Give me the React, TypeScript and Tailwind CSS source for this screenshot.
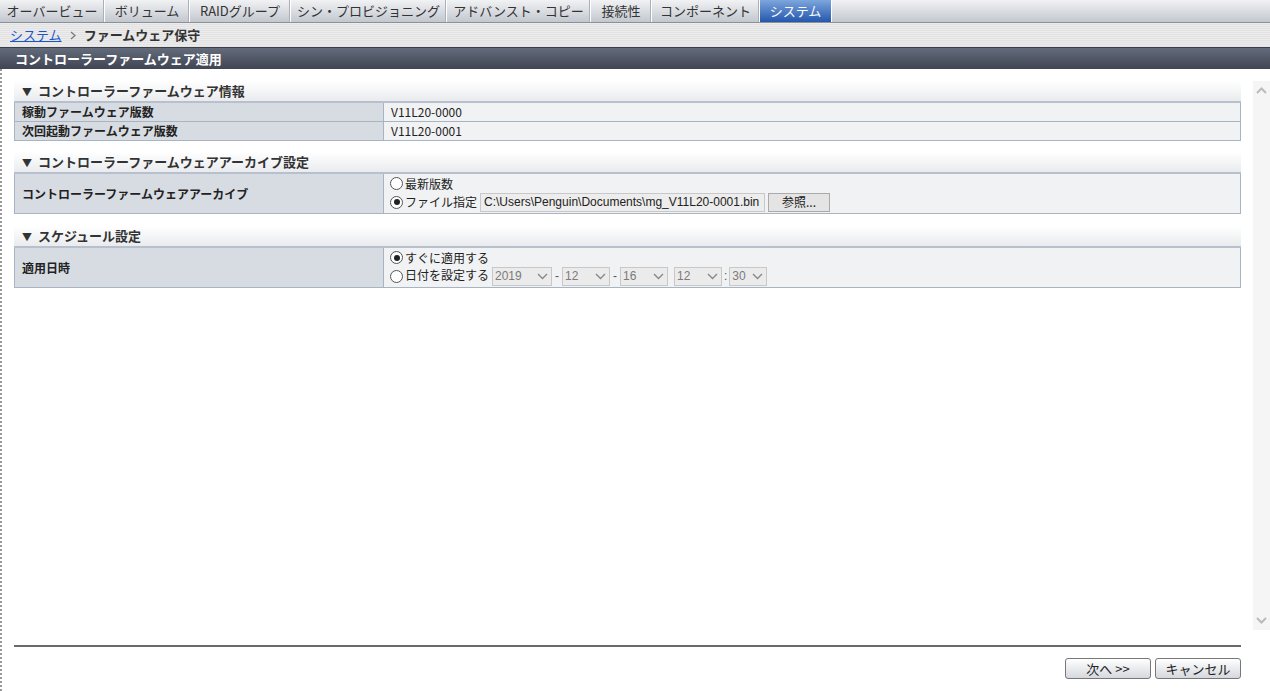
import React from 'react';

const FONT = '"Noto Sans CJK JP", "Liberation Sans", sans-serif';

const TABS = [
  { label: 'オーバービュー', w: 'w-[105px]' },
  { label: 'ボリューム', w: 'w-[85px]' },
  { label: 'RAIDグループ', w: 'w-[101px]' },
  { label: 'シン・プロビジョニング', w: 'w-[156px]' },
  { label: 'アドバンスト・コピー', w: 'w-[144px]' },
  { label: '接続性', w: 'w-[61px]' },
  { label: 'コンポーネント', w: 'w-[108px]' },
];

function Radio({ checked }: { checked?: boolean }) {
  return (
    <span className="inline-flex w-[13px] h-[13px] rounded-full border border-[#555] bg-white items-center justify-center mr-[2px] shrink-0">
      {checked && <span className="w-[6px] h-[6px] rounded-full bg-[#222]" />}
    </span>
  );
}

function Select({ value, w }: { value: string; w: string }) {
  return (
    <span className={`inline-flex items-center justify-between h-[19px] ${w} border border-[#c8c8c8] bg-[#ebebeb] text-[#7a7a7a] pl-[2px] pr-[3px]`}>
      <span>{value}</span>
      <svg width="11" height="7" viewBox="0 0 11 7">
        <path d="M1 1 L5.5 5.5 L10 1" fill="none" stroke="#888" strokeWidth="1.4" />
      </svg>
    </span>
  );
}

function SectionHeader({ title }: { title: string }) {
  return (
    <div className="h-[22px] flex items-center pl-[8px] text-[13px] font-bold text-[#333] bg-gradient-to-b from-white to-[#e9ebee] border-b-2 border-[#b7c0cc]">
      <span className="text-[10px] mr-[6px]">▼</span>
      {title}
    </div>
  );
}

function Row({ label, children, tall }: { label: string; children: React.ReactNode; tall?: boolean }) {
  return (
    <div className={`flex border-b border-[#a9b4c2] ${tall ? 'h-[40px]' : 'h-[19px]'}`}>
      <div className="w-[369px] shrink-0 bg-[#d7dce3] border-r border-[#a9b4c2] flex items-center pl-[7px] font-bold text-[#222]">
        {label}
      </div>
      <div className="flex-1 bg-[#f1f2f4] flex flex-col justify-center pl-[7px] text-[#222]">{children}</div>
    </div>
  );
}

export default function App() {
  return (
    <div className="w-[1270px] h-[691px] bg-white flex flex-col text-[12px] overflow-hidden" style={{ fontFamily: FONT }}>
      {/* tabs */}
      <div className="h-[23px] flex bg-gradient-to-b from-[#f1f2f4] to-[#c3c8cf] border-b border-[#8b919b] shrink-0">
        {TABS.map(t => (
          <div key={t.label} className={`${t.w} h-full flex items-center justify-center border-r border-white text-[#333] text-[13px] shadow-[inset_-1px_0_0_#aab0b9]`}>
            {t.label}
          </div>
        ))}
        <div className="w-[72px] h-full flex items-center justify-center text-white text-[13px] bg-gradient-to-b from-[#7ea6dc] to-[#2457ad] border-r border-white">
          システム
        </div>
      </div>

      {/* breadcrumb */}
      <div className="h-[24px] flex items-center pl-[10px] text-[13px] shrink-0 bg-[repeating-linear-gradient(to_bottom,#ececec_0px,#ececec_1px,#e2e2e2_1px,#e2e2e2_2px)]">
        <span className="text-[#1a56c8] underline">システム</span>
        <svg width="6" height="9" viewBox="0 0 6 9" className="mx-[8px]">
          <path d="M1 1 L5 4.5 L1 8" fill="none" stroke="#777" strokeWidth="1.2" />
        </svg>
        <span className="font-bold text-[#333]">ファームウェア保守</span>
      </div>

      {/* title */}
      <div className="h-[22px] flex items-center pl-[15px] text-white font-bold text-[13px] bg-gradient-to-b from-[#646b7a] to-[#3f4553] border-t border-[#3a3f4a] shrink-0">
        コントローラーファームウェア適用
      </div>

      {/* body */}
      <div className="flex-1 flex border-l-2 border-dotted border-[#999] min-h-0">
        <div className="flex-1 flex flex-col pl-[12px] pr-[12px]">
          <div className="flex-1 pt-[12px]">
            <SectionHeader title="コントローラーファームウェア情報" />
            <div className="border-l border-r border-[#a9b4c2]">
              <Row label="稼動ファームウェア版数">V11L20-0000</Row>
              <Row label="次回起動ファームウェア版数">V11L20-0001</Row>
            </div>

            <div className="mt-[11px]">
              <SectionHeader title="コントローラーファームウェアアーカイブ設定" />
              <div className="border-l border-r border-[#a9b4c2]">
                <Row label="コントローラーファームウェアアーカイブ" tall>
                  <div className="flex items-center h-[17px] -ml-[1px]">
                    <Radio />
                    <span>最新版数</span>
                  </div>
                  <div className="flex items-center h-[20px] -ml-[1px]">
                    <Radio checked />
                    <span>ファイル指定</span>
                    <span className="ml-[3px] h-[19px] w-[285px] flex items-center pl-[3px] bg-[#ededed] border border-[#c8c8c8] font-['Liberation_Sans'] text-[12px]">
                      C:\Users\Penguin\Documents\mg_V11L20-0001.bin
                    </span>
                    <span className="ml-[3px] h-[19px] w-[62px] flex items-center justify-center bg-[#e4e4e4] border border-[#aaa]">
                      参照...
                    </span>
                  </div>
                </Row>
              </div>
            </div>

            <div className="mt-[12px]">
              <SectionHeader title="スケジュール設定" />
              <div className="border-l border-r border-[#a9b4c2]">
                <Row label="適用日時" tall>
                  <div className="flex items-center h-[17px] -ml-[1px]">
                    <Radio checked />
                    <span>すぐに適用する</span>
                  </div>
                  <div className="flex items-center h-[20px] -ml-[1px] font-['Liberation_Sans','Noto_Sans_CJK_JP',sans-serif]">
                    <Radio />
                    <span>日付を設定する</span>
                    <span className="ml-[3px]"><Select value="2019" w="w-[60px]" /></span>
                    <span className="mx-[3px] text-[#555]">-</span>
                    <Select value="12" w="w-[48px]" />
                    <span className="mx-[3px] text-[#555]">-</span>
                    <Select value="16" w="w-[48px]" />
                    <span className="ml-[6px]"><Select value="12" w="w-[48px]" /></span>
                    <span className="mx-[2px] text-[#555]">:</span>
                    <Select value="30" w="w-[38px]" />
                  </div>
                </Row>
              </div>
            </div>
          </div>

          {/* footer */}
          <div className="border-t-2 border-[#6a6a6a] h-[45px] flex items-center justify-end gap-[4px] shrink-0 mb-[1px]">
            <button className="w-[86px] h-[21px] rounded-[3px] border border-[#777] bg-gradient-to-b from-white to-[#d5d8dd] text-[13px] text-[#222]">
              次へ &gt;&gt;
            </button>
            <button className="w-[86px] h-[21px] rounded-[3px] border border-[#777] bg-gradient-to-b from-white to-[#d5d8dd] text-[13px] text-[#222]">
              キャンセル
            </button>
          </div>
        </div>

        {/* scrollbar */}
        <div className="w-[17px] mt-[12px] mb-[61px] bg-[#f5f5f5] flex flex-col justify-between items-center py-[6px] shrink-0">
          <svg width="11" height="7" viewBox="0 0 11 7">
            <path d="M1 6 L5.5 1.5 L10 6" fill="none" stroke="#bbb" strokeWidth="2" />
          </svg>
          <svg width="11" height="7" viewBox="0 0 11 7">
            <path d="M1 1 L5.5 5.5 L10 1" fill="none" stroke="#bbb" strokeWidth="2" />
          </svg>
        </div>
      </div>
    </div>
  );
}
